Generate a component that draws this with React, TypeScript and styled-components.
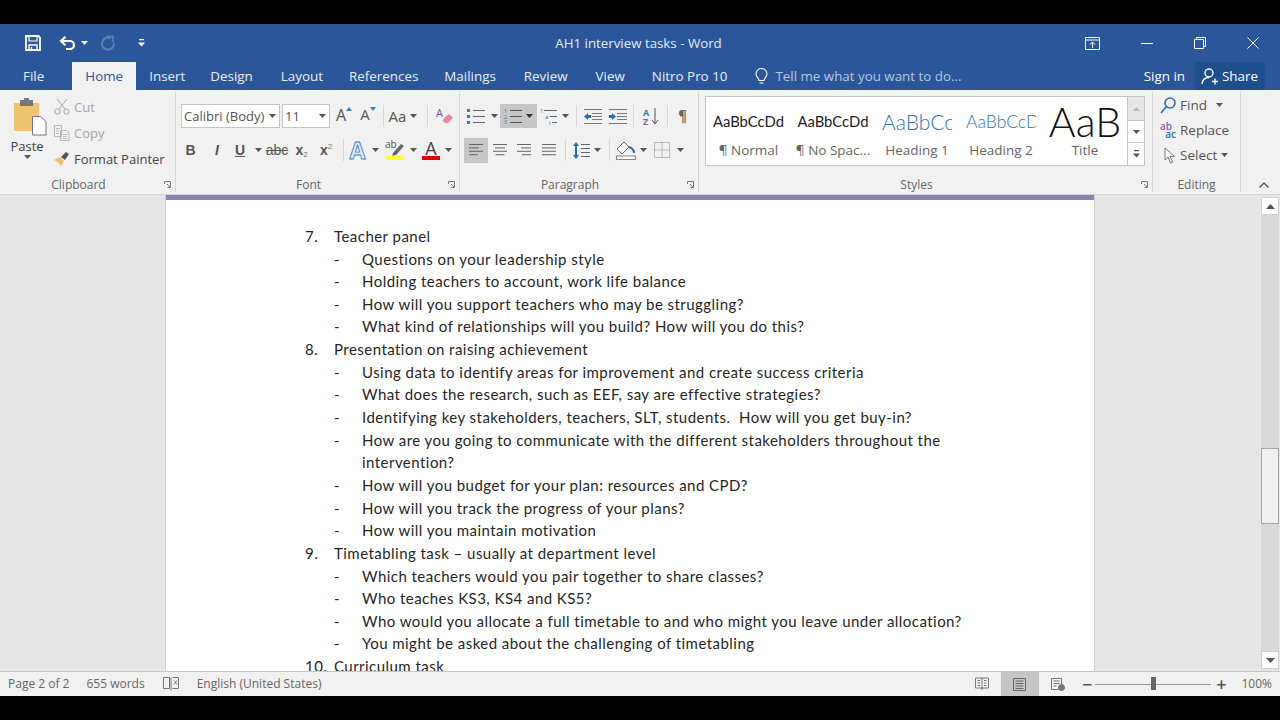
import React from "react";
import styled, { createGlobalStyle } from "styled-components";

const UI = `"Open Sans", "Noto Sans", sans-serif`;
const DOC = `Lato, "Open Sans", sans-serif`;

const GlobalStyle = createGlobalStyle`
  html, body { margin: 0; padding: 0; background: #000; }
  * { box-sizing: border-box; }
  svg { display: block; flex: none; }
`;

// small icons
const Caret = ({ color = "#555" }: { color?: string }) => (
  <svg width="7" height="4" viewBox="0 0 7 4"><path d="M0 0h7L3.5 4z" fill={color} /></svg>
);

const SaveIcon = () => (
  <svg width="16" height="16" viewBox="0 0 16 16" fill="none" stroke="#fff" strokeWidth="1.8">
    <path d="M1 1h12.5L15 2.5V15H1z" />
    <path d="M4 1v5h8V1" strokeWidth="1.2" />
    <path d="M4 15v-5h8v5M6.5 12v3" strokeWidth="1.4" />
  </svg>
);
const UndoIcon = () => (
  <svg width="18" height="14" viewBox="0 0 18 14" fill="none" stroke="#fff" strokeWidth="2.2">
    <path d="M2 5h9a4 4 0 0 1 0 8H7" />
    <path d="M6.5 0.8L2 5l4.5 4.2" />
  </svg>
);
const RedoIcon = () => (
  <svg width="16" height="16" viewBox="0 0 16 16" fill="none" stroke="#5d80b5" strokeWidth="2">
    <path d="M11 3.4A6 6 0 1 0 14 8.5" />
    <path d="M6.5 1.2h6.5v6" strokeWidth="1.6" />
  </svg>
);
const MoreIcon = ({ color }: { color: string }) => (
  <svg width="7" height="8" viewBox="0 0 7 8" fill={color}><path d="M1 0h5v1.2H1zM0 3.4h7L3.5 7.4z" /></svg>
);
const RibbonDisplay = () => (
  <svg width="15" height="13" viewBox="0 0 15 13" fill="none" stroke="#fff"><path d="M.5.5h14v12H.5zM.5 3h14" /><path d="M7.5 11V5M5 7.5L7.5 5 10 7.5" /></svg>
);
const MinIcon = () => (
  <svg width="12" height="12" viewBox="0 0 12 12" stroke="#fff"><path d="M0 6.5h12" /></svg>
);
const RestoreIcon = () => (
  <svg width="12" height="12" viewBox="0 0 12 12" fill="none" stroke="#fff"><path d="M.5 2.5h9v9h-9zM2.5 2.5v-2h9v9h-2" /></svg>
);
const CloseIcon = () => (
  <svg width="12" height="12" viewBox="0 0 12 12" stroke="#fff"><path d="M.5.5l11 11M11.5.5l-11 11" /></svg>
);
const BulbIcon = () => (
  <svg width="13" height="17" viewBox="0 0 13 17" fill="none" stroke="#fff" strokeWidth="1.1">
    <path d="M4 12.5C4 10 1 9 1 6a5.5 5.5 0 0 1 11 0c0 3-3 4-3 6.5z" /><path d="M4.5 15h4" />
  </svg>
);
const ShareIcon = () => (
  <svg width="18" height="17" viewBox="0 0 18 17" fill="none" stroke="#fff" strokeWidth="1.4">
    <circle cx="8" cy="5" r="4" /><path d="M1 16c.5-4 3-6.5 7-6.5M11 13.5h6M14 10.5v6" />
  </svg>
);

const PasteIcon = () => (
  <svg width="33" height="38" viewBox="0 0 33 38">
    <rect x="0" y="5" width="25" height="28" fill="#eec271" />
    <rect x="6" y="2" width="13" height="6" fill="#77767a" />
    <rect x="10" y="0" width="5" height="4" fill="#77767a" />
    <path d="M18.5 18.5h8l5.5 5v13.5h-13.5z" fill="#fff" stroke="#77767a" />
  </svg>
);
const CutIcon = () => (
  <svg width="16" height="17" viewBox="0 0 16 17" fill="none" stroke="#b8b8b8" strokeWidth="1.2">
    <path d="M3 1l8 10M13 1L5 11" /><circle cx="3.5" cy="13.5" r="2.5" /><circle cx="12.5" cy="13.5" r="2.5" />
  </svg>
);
const CopyIcon = () => (
  <svg width="16" height="16" viewBox="0 0 16 16" fill="none" stroke="#b8b8b8">
    <path d="M.5.5h7v11h-7zM6.5 5.500h6l2.500 2.500v7.500h-8.500zM2 3.500h4M2 6h3M2 8.500h3M9 9.500h4M9 11.500h4M9 13.500h4" />
  </svg>
);
const PainterIcon = () => (
  <svg width="16" height="14" viewBox="0 0 16 14">
    <path d="M0 8l6-3 4 4-3 5C5 11 3 9.5 0 8z" fill="#eec271" />
    <path d="M7 5l5-5 3 2-4 6z" fill="#555" />
  </svg>
);
const ChipIcon = ({ up }: { up?: boolean }) => (
  <svg width="6" height="4" viewBox="0 0 6 4"><path d={up ? "M0 4l3-4 3 4z" : "M0 0l3 4 3-4z"} fill="#3e7cc4" /></svg>
);
const EraserIcon = () => (
  <svg width="17" height="18" viewBox="0 0 17 18">
    <path d="M9 10l4-3 4 3.500-5 5.500h-3l-2.500-2.500z" fill="#e38b9d" />
    <text x="0" y="10" fontSize="11" fill="#5f5aa2" fontFamily="Open Sans, sans-serif">A</text>
  </svg>
);
const BulletsIcon = () => (
  <svg width="18" height="16" viewBox="0 0 18 16">
    <g fill="#3e7cc4"><rect x="0" y="1" width="3" height="3" /><rect x="0" y="7" width="3" height="3" /><rect x="0" y="13" width="3" height="3" /></g>
    <path d="M6 2.5h12M6 8.5h12M6 14.5h12" stroke="#666" />
  </svg>
);
const NumberIcon = () => (
  <svg width="18" height="16" viewBox="0 0 18 16">
    <g fontSize="5" fill="#2d6cb5" fontFamily="Open Sans, sans-serif"><text x="0" y="5">1</text><text x="0" y="10.5">2</text><text x="0" y="16">3</text></g>
    <path d="M6 2.5h12M6 8.5h12M6 14.5h12" stroke="#555" />
  </svg>
);
const MultiIcon = () => (
  <svg width="18" height="17" viewBox="0 0 18 17">
    <g fontSize="6" fill="#2d6cb5" fontFamily="Open Sans, sans-serif"><text x="0" y="5">1</text><text x="5" y="11">a</text><text x="9" y="17">i</text></g>
    <path d="M4 2.5h13M10 8.5h7M12 14.5h5" stroke="#666" />
  </svg>
);
const IndentIcon = ({ out }: { out?: boolean }) => (
  <svg width="18" height="15" viewBox="0 0 18 15">
    <path d="M0 .5h18M8 4.500h10M8 7.500h10M8 10.500h10M0 14.500h18" stroke="#777" />
    <path d={out ? "M0 7.500L4 4v2h3v3H4v2z" : "M7 7.500L3 4v2H0v3h3v2z"} fill="#2d6cb5" />
  </svg>
);
const SortIcon = () => (
  <svg width="16" height="17" viewBox="0 0 16 17">
    <g fontSize="9" fontWeight="700" fontFamily="Open Sans, sans-serif"><text x="0" y="8" fill="#3e7cc4">A</text><text x="0" y="17" fill="#8a5ca8">Z</text></g>
    <path d="M12 0v15M9 12l3 4 3-4" fill="none" stroke="#555" />
  </svg>
);
const AlignIcon = ({ kind }: { kind: "left" | "center" | "right" | "justify" }) => {
  const rows = [14, 10, 14, 9];
  const x = (w: number) => (kind === "left" || kind === "justify" ? 0 : kind === "center" ? (14 - w) / 2 : 14 - w);
  return (
    <svg width="14" height="12" viewBox="0 0 14 12">
      {rows.map((w0, i) => {
        const w = kind === "justify" ? 14 : w0;
        return <rect key={i} x={x(w)} y={i * 3.4} width={w} height="1" fill="#666" />;
      })}
    </svg>
  );
};
const SpacingIcon = () => (
  <svg width="17" height="17" viewBox="0 0 17 17">
    <path d="M3 0l3 4H4v9h2l-3 4-3-4h2V4H0z" fill="#2d6cb5" />
    <path d="M8 2.5h9M8 6.5h9M8 10.500h9M8 14.500h9" stroke="#666" />
  </svg>
);
const ShadingIcon = () => (
  <svg width="20" height="19" viewBox="0 0 20 19" fill="none">
    <path d="M8 1L1 8l5 5 7-7z" fill="#fff" stroke="#666" />
    <path d="M13 6c3 1 5 3 5 6" stroke="#2d6cb5" strokeWidth="2" />
    <rect x=".5" y="15" width="19" height="3.5" fill="#fff" stroke="#888" />
  </svg>
);
const BorderIcon = () => (
  <svg width="16" height="16" viewBox="0 0 16 16" fill="none" stroke="#888" strokeDasharray="1 1">
    <path d="M.5.5h15v15H.5zM8 .5v15M.5 8h15" />
  </svg>
);
const HighlightIcon = () => (
  <svg width="20" height="20" viewBox="0 0 20 20">
    <text x="0" y="8" fontSize="10" fill="#555" fontFamily="Open Sans, sans-serif">ab</text>
    <path d="M8 13l8-9 3 2-8 9-4 1z" fill="#666" />
    <rect x="0" y="15.500" width="19" height="4.500" fill="#ffff3c" />
  </svg>
);
const PilcrowText = styled.span`
  font: 700 16px "Liberation Serif", serif;
  color: #666;
`;
const FindIcon = () => (
  <svg width="16" height="17" viewBox="0 0 16 17" fill="none" stroke="#2d6cb5" strokeWidth="1.6">
    <circle cx="10" cy="6" r="5" /><path d="M6 10l-5 6" />
  </svg>
);
const SelectIcon = () => (
  <svg width="12" height="17" viewBox="0 0 12 17" fill="#fff" stroke="#777">
    <path d="M1 1v12l3-3 2.5 6 2-1-2.500-5.500h4.500z" />
  </svg>
);
const Launcher = () => (
  <svg width="7" height="7" viewBox="0 0 7 7" fill="none" stroke="#777">
    <path d="M.5 3V.5H6.5v6H3.500M3 3l3 3" />
  </svg>
);
const ChevronUp = () => (
  <svg width="10" height="6" viewBox="0 0 10 6" fill="none" stroke="#555" strokeWidth="1.3"><path d="M.5 5.5L5 1l4.500 4.500" /></svg>
);
const SpellIcon = () => (
  <svg width="16" height="14" viewBox="0 0 16 14" fill="none" stroke="#777">
    <path d="M.5.5h6v11h-6zM8 .5v13M9.5.5h6v11h-6" /><path d="M11 3.5l3 4M14 3.5l-3 4" />
  </svg>
);
const ReadIcon = () => (
  <svg width="14" height="14" viewBox="0 0 14 14" fill="none" stroke="#777">
    <path d="M.5 1h13v10h-13zM7 1v12M2.500 3.500h2.500M2.500 6h2.500M2.500 8.500h2.500M9 3.500h2.500M9 6h2.500M9 8.500h2.500" />
  </svg>
);
const PrintIcon = () => (
  <svg width="13" height="13" viewBox="0 0 13 13" fill="none" stroke="#666">
    <path d="M.5.5h12v12H.5zM2.5 3h8M2.500 5.500h8M2.500 8h8M2.500 10.500h8" />
  </svg>
);
const WebIcon = () => (
  <svg width="14" height="13" viewBox="0 0 14 13" fill="none" stroke="#777">
    <path d="M8 11.500H.5V.5h10V6M2.500 3h6M2.500 5.500h6M2.500 8h3" />
    <circle cx="10.5" cy="9.5" r="3" fill="#777" />
  </svg>
);

// layout
const Screen = styled.div`
  width: 1280px;
  height: 720px;
  padding: 24px 0;
  background: #000;
  overflow: hidden;
`;
const Window = styled.div`
  height: 672px;
  display: flex;
  flex-direction: column;
  font-family: ${UI};
`;
const TitleBar = styled.div`
  height: 38px;
  flex: none;
  background: #2b579a;
  display: grid;
  grid-template-columns: 1fr auto 1fr;
  align-items: center;
  color: #fff;
`;
const Qat = styled.div`
  display: flex;
  align-items: center;
  padding-left: 25px;
`;
const Spacer = styled.span<{ $w: number }>`
  width: ${(p) => p.$w}px;
  flex: none;
`;
const Title = styled.div`
  font-size: 13.3px;
  color: #e4ebf5;
  padding-right: 3px;
`;
const WinControls = styled.div`
  display: flex;
  justify-content: flex-end;
  align-items: center;
  padding-right: 21px;
`;
const WinButton = styled.span<{ $mr: number }>`
  margin-right: ${(p) => p.$mr}px;
`;
const TabBar = styled.div`
  height: 28px;
  flex: none;
  background: #2b579a;
  display: flex;
  align-items: stretch;
  padding-left: 23px;
  font-size: 13.4px;
  color: #e8eef7;
`;
const Tab = styled.div<{ $left: number; $active?: boolean }>`
  margin-left: ${(p) => p.$left}px;
  display: flex;
  align-items: center;
  white-space: nowrap;
  ${(p) =>
    p.$active &&
    `
    background: #f1f1f1;
    color: #2b579a;
    width: 64px;
    justify-content: center;
  `}
`;
const TellMe = styled.div`
  margin-left: 28px;
  display: flex;
  align-items: center;
  gap: 7px;
  color: #b4c6e2;
  font-size: 13.35px;
  flex: 1;
  white-space: nowrap;
`;
const SignIn = styled.div`
  display: flex;
  align-items: center;
  margin-right: 10px;
  color: #fff;
`;
const ShareBox = styled.div`
  width: 70px;
  margin-right: 15px;
  background: #1e4e8c;
  color: #fff;
  display: flex;
  align-items: center;
  gap: 3px;
  padding-left: 6px;
`;

const Ribbon = styled.div`
  height: 105px;
  flex: none;
  background: #f1f1f1;
  display: flex;
  border-bottom: 1px solid #d4d4d4;
  position: relative;
`;
const Group = styled.div<{ $w: number; $noSep?: boolean }>`
  width: ${(p) => p.$w}px;
  flex: none;
  height: 100px;
  margin-top: 2px;
  display: flex;
  flex-direction: column;
  border-right: ${(p) => (p.$noSep ? "none" : "1px solid #d6d6d6")};
`;
const GroupBody = styled.div`
  flex: 1;
  display: flex;
  min-height: 0;
`;
const GroupLabel = styled.div<{ $plain?: boolean }>`
  height: 15px;
  flex: none;
  display: flex;
  align-items: center;
  justify-content: center;
  position: relative;
  padding-right: ${(p) => (p.$plain ? 0 : 18)}px;
  font-size: 12px;
  color: #666;
`;
const LauncherSlot = styled.span`
  position: absolute;
  right: 4px;
  top: 4px;
`;
const PasteCol = styled.div`
  width: 54px;
  flex: none;
  display: flex;
  flex-direction: column;
  align-items: center;
  padding-top: 6px;
  font-size: 13px;
  color: #444;
  line-height: 18px;
`;
const PasteIconSlot = styled.div`
  padding-left: 6px;
`;
const PasteLabel = styled.div`
  margin-top: 1px;
`;
const ClipList = styled.div`
  display: flex;
  flex-direction: column;
  padding-top: 6px;
  gap: 9px;
`;
const ClipItem = styled.div<{ $off?: boolean }>`
  height: 17px;
  display: flex;
  align-items: center;
  gap: 4px;
  font-size: 13px;
  white-space: nowrap;
  color: ${(p) => (p.$off ? "#a8a8a8" : "#444")};
`;
const Rows = styled.div<{ $pad: number }>`
  flex: 1;
  display: flex;
  flex-direction: column;
  padding: 12px 0 0 ${(p) => p.$pad}px;
  gap: 10px;
`;
const ToolRow = styled.div`
  height: 24px;
  display: flex;
  align-items: center;
`;
const FontBox = styled.div<{ $w: number; $left?: number }>`
  width: ${(p) => p.$w}px;
  height: 24px;
  flex: none;
  margin-left: ${(p) => p.$left ?? 0}px;
  margin-right: 2px;
  background: #fff;
  border: 1px solid #c6c6c6;
  display: flex;
  align-items: center;
  justify-content: space-between;
  padding: 0 3px 0 2px;
  font-size: 13px;
  color: #555;
  white-space: nowrap;
  overflow: hidden;
`;
const Tool = styled.span<{ $w: number; $left?: number; $on?: boolean; $h?: number }>`
  width: ${(p) => p.$w}px;
  height: ${(p) => p.$h ?? 24}px;
  margin-left: ${(p) => p.$left ?? 0}px;
  flex: none;
  display: flex;
  align-items: center;
  justify-content: center;
  gap: 4px;
  color: #555;
  background: ${(p) => (p.$on ? "#c6c6c6" : "transparent")};
`;
const GrowTool = styled(Tool)`
  gap: 0;
  align-items: flex-start;
  padding-top: 3px;
`;
const VSep = styled.span<{ $left: number }>`
  width: 1px;
  height: 22px;
  flex: none;
  margin-left: ${(p) => p.$left}px;
  background: #d6d6d6;
`;
const BigA = styled.span<{ $size: number }>`
  font-size: ${(p) => p.$size}px;
  color: #555;
  line-height: 1;
`;
const FormatText = styled.span<{ $b?: boolean; $i?: boolean; $u?: boolean; $s?: boolean }>`
  font-family: "Liberation Sans", sans-serif;
  font-size: 14px;
  color: #555;
  font-weight: ${(p) => (p.$b ? 700 : 400)};
  font-style: ${(p) => (p.$i ? "italic" : "normal")};
  text-decoration: ${(p) => (p.$u ? "underline" : p.$s ? "line-through" : "none")};
`;
const Script = styled.sub<{ $sup?: boolean }>`
  font-size: 8px;
  font-weight: 400;
  vertical-align: ${(p) => (p.$sup ? "6px" : "-2px")};
  color: #777;
`;
const OutlineA = styled.span`
  font-size: 23px;
  line-height: 22px;
  font-weight: 700;
  color: #dfeaf6;
  -webkit-text-stroke: 0.8px #3e7cc4;
`;
const ColorA = styled.span`
  display: flex;
  flex-direction: column;
  align-items: center;
  font-size: 18px;
  line-height: 16px;
  color: #444;
  &::after {
    content: "";
    display: block;
    width: 18px;
    height: 4px;
    background: #e00000;
  }
`;

const Gallery = styled.div`
  width: 440px;
  height: 70px;
  margin: 4px 0 0 6px;
  background: #fff;
  border: 1px solid #c6c6c6;
  display: flex;
`;
const StyleCell = styled.div<{ $w: number }>`
  width: ${(p) => p.$w}px;
  flex: none;
  display: flex;
  flex-direction: column;
  align-items: center;
  overflow: hidden;
`;
const StylePreview = styled.div<{ $size: number; $color?: string; $light?: boolean; $clip?: number }>`
  height: 45px;
  padding-top: 4px;
  display: flex;
  align-items: center;
  justify-content: ${(p) => (p.$clip ? "flex-start" : "center")};
  width: ${(p) => p.$clip ?? 84}px;
  overflow: hidden;
  white-space: nowrap;
  line-height: 1;
  font-family: ${DOC};
  font-weight: ${(p) => (p.$light ? 300 : 400)};
  font-size: ${(p) => p.$size}px;
  color: ${(p) => p.$color ?? "#222"};
`;
const StyleName = styled.div`
  margin-top: -1px;
  font-size: 13.5px;
  color: #666;
  white-space: nowrap;
`;
const GalleryScroll = styled.div`
  margin-left: auto;
  width: 17px;
  flex: none;
  border-left: 1px solid #c6c6c6;
  display: flex;
  flex-direction: column;
`;
const GalleryBtn = styled.div<{ $off?: boolean; $h: number }>`
  height: ${(p) => p.$h}px;
  display: flex;
  align-items: center;
  justify-content: center;
  background: ${(p) => (p.$off ? "#e6e6e6" : "#fff")};
  border-bottom: 1px solid #c6c6c6;
  &:last-child {
    border-bottom: none;
  }
`;
const EditList = styled.div`
  display: flex;
  flex-direction: column;
  padding: 4px 0 0 7px;
  gap: 7px;
`;
const EditItem = styled.div`
  height: 18px;
  display: flex;
  align-items: center;
  gap: 4px;
  font-size: 13.5px;
  color: #555;
  white-space: nowrap;
`;
const FindCaret = styled.span`
  margin-left: 5px;
`;
const AbAc = styled.span`
  width: 16px;
  flex: none;
  display: flex;
  flex-direction: column;
  font-size: 10px;
  line-height: 8px;
  font-weight: 600;
  color: #8a5ca8;
`;
const AcLine = styled.span`
  color: #2d6cb5;
  text-align: right;
`;
const Collapse = styled.div`
  position: absolute;
  right: 11px;
  bottom: 6px;
`;

const DocArea = styled.div`
  flex: 1;
  min-height: 0;
  display: flex;
  background: #e6e6e6;
`;
const PageWrap = styled.div`
  flex: 1;
  overflow: hidden;
  padding-left: 166px;
`;
const Page = styled.div`
  width: 928px;
  height: 476px;
  overflow: hidden;
  background: #fff;
  border-top: 5px solid #8a82ab;
  box-shadow: 0 0 0 1px #d0d0d0;
  padding: 24.9px 0 0 139px;
  font-family: ${DOC};
  font-size: 15px;
  color: #262626;
`;
const Line = styled.div<{ $sub?: boolean }>`
  height: 22.65px;
  line-height: 22.65px;
  display: flex;
  white-space: pre;
  letter-spacing: 0.46px;
  padding-left: ${(p) => (p.$sub ? 29 : 0)}px;
`;
const Marker = styled.span<{ $w: number }>`
  width: ${(p) => p.$w}px;
  flex: none;
`;
const Scrollbar = styled.div`
  width: 18px;
  flex: none;
  margin: 2px 1px 2px 0;
  background: #d9d9d9;
  display: flex;
  flex-direction: column;
`;
const ScrollBtn = styled.div`
  height: 18px;
  flex: none;
  background: #fff;
  border: 1px solid #d0d0d0;
  display: flex;
  align-items: center;
  justify-content: center;
`;
const ScrollSpace = styled.div<{ $h: number }>`
  height: ${(p) => p.$h}px;
  flex: none;
`;
const ScrollThumb = styled.div`
  height: 76px;
  flex: none;
  background: #f0f0f0;
  border: 1px solid #a8a8a8;
`;
const Grow = styled.div`
  flex: 1;
`;

const StatusBar = styled.div`
  height: 25px;
  flex: none;
  background: #f1f1f1;
  border-top: 1px solid #c6c6c6;
  display: flex;
  align-items: stretch;
  font-size: 12px;
  color: #666;
  padding-left: 8px;
`;
const StatusItem = styled.div<{ $left?: number }>`
  display: flex;
  align-items: center;
  margin-left: ${(p) => p.$left ?? 0}px;
  padding-bottom: 1px;
  white-space: nowrap;
`;
const ViewBtn = styled.div<{ $on?: boolean }>`
  width: 38px;
  display: flex;
  align-items: center;
  justify-content: center;
  background: ${(p) => (p.$on ? "#c6c6c6" : "transparent")};
`;
const ZoomSlider = styled.div`
  width: 116px;
  margin: 0 5px 0 3px;
  display: flex;
  align-items: center;
  position: relative;
  &::before {
    content: "";
    flex: 1;
    height: 1px;
    background: #999;
  }
`;
const ZoomThumb = styled.span`
  position: absolute;
  left: 56px;
  top: 5px;
  width: 5px;
  height: 13px;
  background: #666;
`;
const ZoomSign = styled.span`
  font-size: 18px;
  font-weight: 600;
  color: #555;
  display: flex;
  align-items: center;
`;

type DocLine = { n?: string; t: string; cont?: boolean };
const lines: DocLine[] = [
  { n: "7.", t: "Teacher panel" },
  { t: "Questions on your leadership style" },
  { t: "Holding teachers to account, work life balance" },
  { t: "How will you support teachers who may be struggling?" },
  { t: "What kind of relationships will you build? How will you do this?" },
  { n: "8.", t: "Presentation on raising achievement" },
  { t: "Using data to identify areas for improvement and create success criteria" },
  { t: "What does the research, such as EEF, say are effective strategies?" },
  { t: "Identifying key stakeholders, teachers, SLT, students.  How will you get buy-in?" },
  { t: "How are you going to communicate with the different stakeholders throughout the" },
  { t: "intervention?", cont: true },
  { t: "How will you budget for your plan: resources and CPD?" },
  { t: "How will you track the progress of your plans?" },
  { t: "How will you maintain motivation" },
  { n: "9.", t: "Timetabling task – usually at department level" },
  { t: "Which teachers would you pair together to share classes?" },
  { t: "Who teaches KS3, KS4 and KS5?" },
  { t: "Who would you allocate a full timetable to and who might you leave under allocation?" },
  { t: "You might be asked about the challenging of timetabling" },
  { n: "10.", t: "Curriculum task" },
];

const tabs: [string, number][] = [
  ["Insert", 13],
  ["Design", 25],
  ["Layout", 28],
  ["References", 26],
  ["Mailings", 26],
  ["Review", 28],
  ["View", 28],
  ["Nitro Pro 10", 27],
];

const App = () => (
  <Screen>
    <GlobalStyle />
    <Window>
      <TitleBar>
        <Qat>
          <SaveIcon />
          <Spacer $w={18} />
          <UndoIcon />
          <Spacer $w={4} />
          <Caret color="#fff" />
          <Spacer $w={12} />
          <RedoIcon />
          <Spacer $w={22} />
          <MoreIcon color="#fff" />
        </Qat>
        <Title>AH1 interview tasks - Word</Title>
        <WinControls>
          <WinButton $mr={41}><RibbonDisplay /></WinButton>
          <WinButton $mr={41}><MinIcon /></WinButton>
          <WinButton $mr={41}><RestoreIcon /></WinButton>
          <CloseIcon />
        </WinControls>
      </TitleBar>
      <TabBar>
        <Tab $left={0}>File</Tab>
        <Tab $left={28} $active>Home</Tab>
        {tabs.map(([name, left]) => (
          <Tab key={name} $left={left}>{name}</Tab>
        ))}
        <TellMe>
          <BulbIcon />
          Tell me what you want to do...
        </TellMe>
        <SignIn>Sign in</SignIn>
        <ShareBox>
          <ShareIcon />
          Share
        </ShareBox>
      </TabBar>
      <Ribbon>
        <Group $w={176}>
          <GroupBody>
            <PasteCol>
              <PasteIconSlot><PasteIcon /></PasteIconSlot>
              <PasteLabel>Paste</PasteLabel>
              <Caret />
            </PasteCol>
            <ClipList>
              <ClipItem $off><CutIcon />Cut</ClipItem>
              <ClipItem $off><CopyIcon />Copy</ClipItem>
              <ClipItem><PainterIcon />Format Painter</ClipItem>
            </ClipList>
          </GroupBody>
          <GroupLabel>
            Clipboard
            <LauncherSlot><Launcher /></LauncherSlot>
          </GroupLabel>
        </Group>
        <Group $w={284}>
          <GroupBody>
            <Rows $pad={4}>
              <ToolRow>
                <FontBox $w={99} $left={1}>Calibri (Body)<Caret /></FontBox>
                <FontBox $w={48}>11<Caret /></FontBox>
                <GrowTool $w={24}><BigA $size={16}>A</BigA><ChipIcon up /></GrowTool>
                <GrowTool $w={24}><BigA $size={15}>A</BigA><ChipIcon /></GrowTool>
                <VSep $left={3} />
                <Tool $w={38}><BigA $size={15}>Aa</BigA><Caret /></Tool>
                <VSep $left={5} />
                <Tool $w={32}><EraserIcon /></Tool>
              </ToolRow>
              <ToolRow>
                <Tool $w={21}><FormatText $b>B</FormatText></Tool>
                <Tool $w={32}><FormatText $i $b>I</FormatText></Tool>
                <Tool $w={14}><FormatText $u $b>U</FormatText></Tool>
                <Tool $w={12} $left={5}><Caret /></Tool>
                <Tool $w={26}><FormatText $s>abc</FormatText></Tool>
                <Tool $w={23}><FormatText $b>x<Script>2</Script></FormatText></Tool>
                <Tool $w={26}><FormatText $b>x<Script $sup>2</Script></FormatText></Tool>
                <VSep $left={4} />
                <Tool $w={27}><OutlineA>A</OutlineA></Tool>
                <Tool $w={8}><Caret /></Tool>
                <Tool $w={28} $left={2}><HighlightIcon /></Tool>
                <Tool $w={8}><Caret /></Tool>
                <Tool $w={28}><ColorA>A</ColorA></Tool>
                <Tool $w={6}><Caret /></Tool>
              </ToolRow>
            </Rows>
          </GroupBody>
          <GroupLabel>
            Font
            <LauncherSlot><Launcher /></LauncherSlot>
          </GroupLabel>
        </Group>
        <Group $w={239}>
          <GroupBody>
            <Rows $pad={4}>
              <ToolRow>
                <Tool $w={24}><BulletsIcon /></Tool>
                <Tool $w={12}><Caret /></Tool>
                <Tool $w={37} $on><NumberIcon /><Caret color="#333" /></Tool>
                <Tool $w={18} $left={3}><MultiIcon /></Tool>
                <Tool $w={14}><Caret /></Tool>
                <VSep $left={4} />
                <Tool $w={32}><IndentIcon out /></Tool>
                <Tool $w={18}><IndentIcon /></Tool>
                <VSep $left={6} />
                <Tool $w={33}><SortIcon /></Tool>
                <VSep $left={0} />
                <Tool $w={29}><PilcrowText>¶</PilcrowText></Tool>
              </ToolRow>
              <ToolRow>
                <Tool $w={24} $h={25} $on><AlignIcon kind="left" /></Tool>
                <Tool $w={24}><AlignIcon kind="center" /></Tool>
                <Tool $w={24}><AlignIcon kind="right" /></Tool>
                <Tool $w={25}><AlignIcon kind="justify" /></Tool>
                <VSep $left={4} />
                <Tool $w={27} $left={2}><SpacingIcon /></Tool>
                <Tool $w={5}><Caret /></Tool>
                <VSep $left={9} />
                <Tool $w={28} $left={2}><ShadingIcon /></Tool>
                <Tool $w={6}><Caret /></Tool>
                <Tool $w={28} $left={2}><BorderIcon /></Tool>
                <Tool $w={8}><Caret /></Tool>
              </ToolRow>
            </Rows>
          </GroupBody>
          <GroupLabel>
            Paragraph
            <LauncherSlot><Launcher /></LauncherSlot>
          </GroupLabel>
        </Group>
        <Group $w={454}>
          <GroupBody>
            <Gallery>
              <StyleCell $w={85}>
                <StylePreview $size={14.8}>AaBbCcDd</StylePreview>
                <StyleName>¶ Normal</StyleName>
              </StyleCell>
              <StyleCell $w={84}>
                <StylePreview $size={14.8}>AaBbCcDd</StylePreview>
                <StyleName>¶ No Spac...</StyleName>
              </StyleCell>
              <StyleCell $w={84}>
                <StylePreview $size={21} $color="#2e74b5" $light $clip={70}>AaBbCc</StylePreview>
                <StyleName>Heading 1</StyleName>
              </StyleCell>
              <StyleCell $w={84}>
                <StylePreview $size={17.5} $color="#2e74b5" $light $clip={70}>AaBbCcD</StylePreview>
                <StyleName>Heading 2</StyleName>
              </StyleCell>
              <StyleCell $w={84}>
                <StylePreview $size={41} $color="#111" $light>AaB</StylePreview>
                <StyleName>Title</StyleName>
              </StyleCell>
              <GalleryScroll>
                <GalleryBtn $off $h={24}><svg width="7" height="4" viewBox="0 0 7 4"><path d="M0 4h7L3.5 0z" fill="#bbb" /></svg></GalleryBtn>
                <GalleryBtn $h={22}><Caret /></GalleryBtn>
                <GalleryBtn $h={22}><MoreIcon color="#555" /></GalleryBtn>
              </GalleryScroll>
            </Gallery>
          </GroupBody>
          <GroupLabel>
            Styles
            <LauncherSlot><Launcher /></LauncherSlot>
          </GroupLabel>
        </Group>
        <Group $w={88}>
          <GroupBody>
            <EditList>
              <EditItem><FindIcon />Find<FindCaret><Caret /></FindCaret></EditItem>
              <EditItem><AbAc>ab<AcLine>ac</AcLine></AbAc>Replace</EditItem>
              <EditItem><Spacer $w={0} /><SelectIcon />Select<Caret /></EditItem>
            </EditList>
          </GroupBody>
          <GroupLabel $plain>Editing</GroupLabel>
        </Group>
        <Collapse><ChevronUp /></Collapse>
      </Ribbon>
      <DocArea>
        <PageWrap>
          <Page>
            {lines.map((l, i) =>
              l.n ? (
                <Line key={i}><Marker $w={29}>{l.n}</Marker>{l.t}</Line>
              ) : (
                <Line key={i} $sub><Marker $w={28}>{l.cont ? "" : "-"}</Marker>{l.t}</Line>
              )
            )}
          </Page>
        </PageWrap>
        <Scrollbar>
          <ScrollBtn><svg width="9" height="5" viewBox="0 0 9 5"><path d="M0 5h9L4.5 0z" fill="#555" /></svg></ScrollBtn>
          <ScrollSpace $h={233} />
          <ScrollThumb />
          <Grow />
          <ScrollBtn><svg width="9" height="5" viewBox="0 0 9 5"><path d="M0 0h9L4.5 5z" fill="#555" /></svg></ScrollBtn>
        </Scrollbar>
      </DocArea>
      <StatusBar>
        <StatusItem>Page 2 of 2</StatusItem>
        <StatusItem $left={17}>655 words</StatusItem>
        <StatusItem $left={18}><SpellIcon /></StatusItem>
        <StatusItem $left={18}>English (United States)</StatusItem>
        <Grow />
        <ViewBtn><ReadIcon /></ViewBtn>
        <ViewBtn $on><PrintIcon /></ViewBtn>
        <ViewBtn><WebIcon /></ViewBtn>
        <StatusItem $left={5}><ZoomSign>−</ZoomSign></StatusItem>
        <ZoomSlider><ZoomThumb /></ZoomSlider>
        <StatusItem><ZoomSign>+</ZoomSign></StatusItem>
        <StatusItem $left={15}>100%</StatusItem>
        <Spacer $w={8} />
      </StatusBar>
    </Window>
  </Screen>
);

export default App;
